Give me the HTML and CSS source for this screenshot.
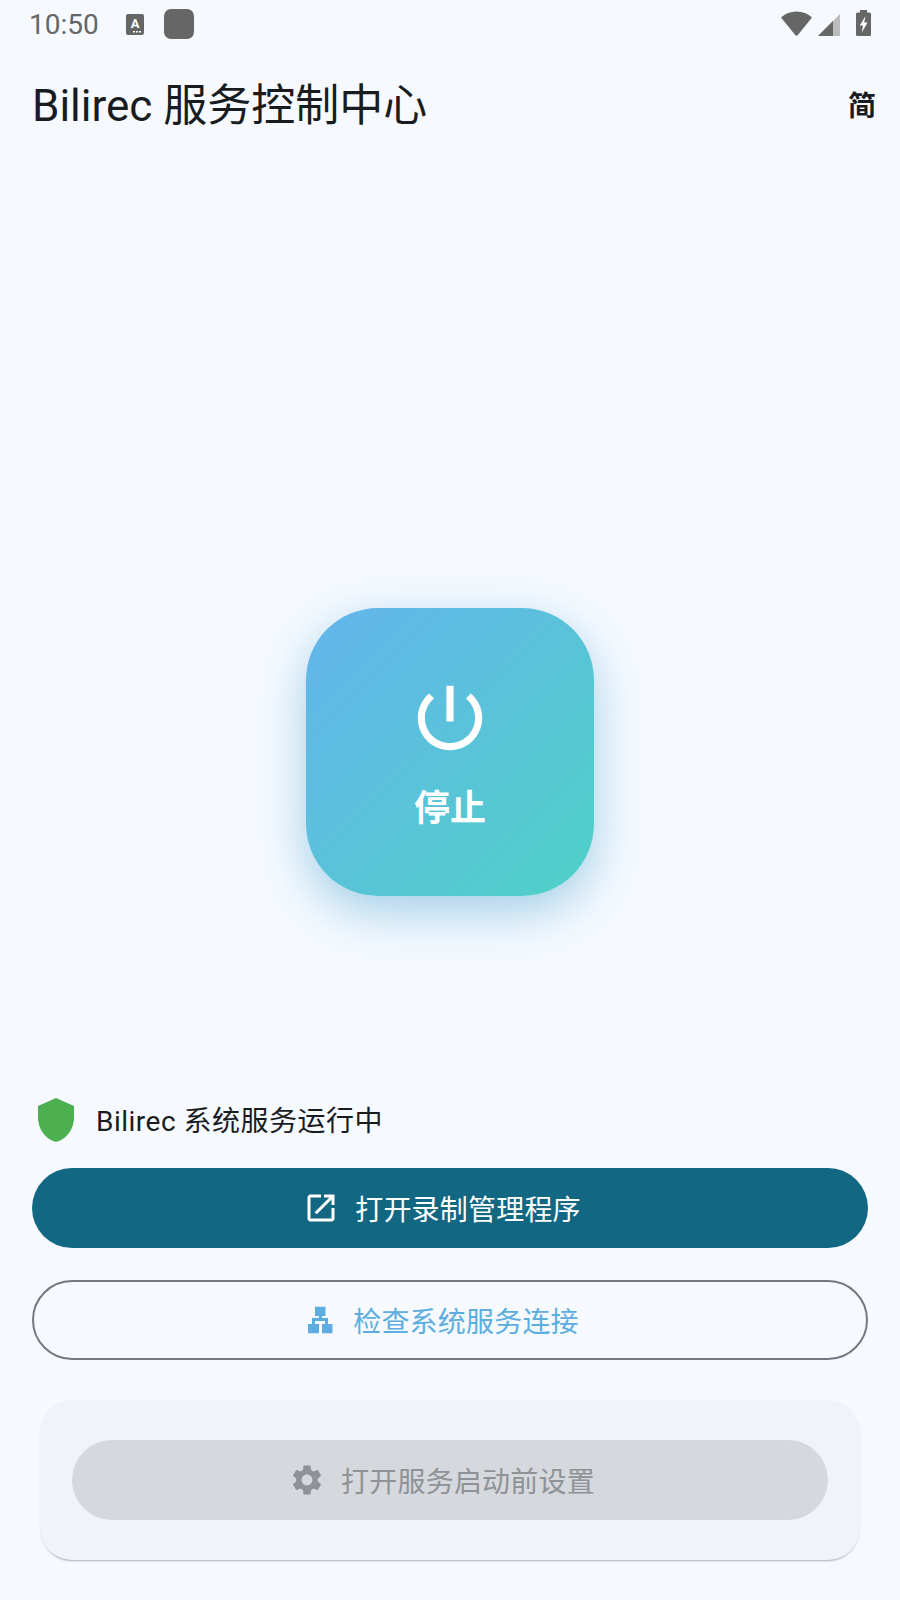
FILE: index.html
```html
<!DOCTYPE html>
<html>
<head>
    <meta charset="utf-8" />
    <title>Bilirec 服务控制中心</title>
    <link rel="stylesheet" href="styles.css">
</head>
<body>
    <div class="status-bar">
        <span class="clock">10:50</span>
        <svg class="note-a" viewBox="0 0 18 21">
            <rect width="18" height="21" rx="2" fill="#666"/>
            <text x="9" y="13.500" class="note-a-text">A</text>
            <rect x="7" y="17" width="2" height="1.500" fill="#fff"/>
            <rect x="10" y="17" width="2" height="1.500" fill="#fff"/>
            <rect x="13" y="17" width="2" height="1.500" fill="#fff"/>
        </svg>
        <div class="note-square"></div>
        <div class="status-right">
            <svg class="wifi" viewBox="0 0 31 25"><path d="M0 6.500C4 2.600 9.500 0.500 15.500 0.500S27 2.600 31 6.500L17 23.800a2 2 0 0 1-3 0z" fill="#666"/></svg>
            <svg class="signal" viewBox="0 0 22 22">
                <path d="M22 0V22H0z" fill="#bbb"/>
                <path d="M15 7V22H0z" fill="#666"/>
            </svg>
            <svg class="battery" viewBox="0 0 15 26">
                <path d="M4 0h7v2.500h2.500a1.500 1.500 0 0 1 1.500 1.500V24.500a1.500 1.500 0 0 1-1.500 1.500H1.500A1.500 1.500 0 0 1 0 24.500V4a1.500 1.500 0 0 1 1.500-1.500H4z" fill="#666"/>
                <path d="M9.500 6L3.800 15.500H7L5.800 22.500L11.500 12.500H8.200z" fill="#fff"/>
            </svg>
        </div>
    </div>

    <div class="app-bar">
        <h1 class="app-title">Bilirec 服务控制中心</h1>
        <span class="lang">简</span>
    </div>

    <div class="main">
        <div class="power-btn">
            <svg class="power-icon" viewBox="0 0 24 24"><path d="M13 3h-2v10h2V3zm4.830 2.170l-1.420 1.420C17.990 7.860 19 9.810 19 12c0 3.870-3.130 7-7 7s-7-3.130-7-7c0-2.190 1.010-4.140 2.580-5.420L6.170 5.170C4.230 6.820 3 9.260 3 12c0 4.970 4.030 9 9 9s9-4.030 9-9c0-2.740-1.230-5.180-3.170-6.830z"/></svg>
            <span class="power-label">停止</span>
        </div>
    </div>

    <div class="footer">
        <div class="service-row">
            <svg class="shield" viewBox="0 0 24 24"><path d="M12 1L3 5v6c0 5.550 3.840 10.740 9 12 5.160-1.260 9-6.450 9-12V5l-9-4z"/></svg>
            <span class="service-text">Bilirec 系统服务运行中</span>
        </div>
        <div class="btn btn-primary">
            <svg class="btn-icon" viewBox="0 0 24 24"><path d="M19 19H5V5h7V3H5c-1.110 0-2 .9-2 2v14c0 1.100.89 2 2 2h14c1.100 0 2-.9 2-2v-7h-2v7zM14 3v2h3.590l-9.830 9.830 1.410 1.410L19 6.410V10h2V3h-7z"/></svg>
            <span>打开录制管理程序</span>
        </div>
        <div class="btn btn-outline">
            <svg class="btn-icon-small" viewBox="0 0 30 30"><path d="M10 1.700H20.500V11H17V13H23V19H27.500V28.300H17V19H20V16H10V19H14V28.300H3V19H7V13H14V11H10z"/></svg>
            <span>检查系统服务连接</span>
        </div>
        <div class="card">
            <div class="btn btn-disabled">
                <svg class="btn-icon" viewBox="0 0 24 24"><path d="M19.140 12.940c.04-.3.06-.61.06-.94 0-.32-.02-.64-.07-.94l2.030-1.580c.18-.14.23-.41.12-.61l-1.920-3.320c-.12-.22-.37-.29-.59-.22l-2.390.96c-.5-.38-1.030-.7-1.620-.94l-.36-2.540c-.04-.24-.24-.41-.48-.41h-3.840c-.24 0-.43.17-.47.41l-.36 2.540c-.59.24-1.130.57-1.620.94l-2.390-.96c-.22-.08-.47 0-.59.22L2.740 8.870c-.12.21-.08.47.12.61l2.030 1.580c-.05.3-.09.63-.09.94s.02.64.07.94l-2.030 1.580c-.18.14-.23.41-.12.61l1.920 3.320c.12.22.37.29.59.22l2.390-.96c.5.38 1.030.7 1.620.94l.36 2.540c.05.24.24.41.48.41h3.840c.24 0 .44-.17.47-.41l.36-2.540c.59-.24 1.130-.56 1.620-.94l2.390.96c.22.08.47 0 .59-.22l1.920-3.320c.12-.22.07-.47-.12-.61l-2.010-1.580zM12 15.600c-1.980 0-3.600-1.620-3.600-3.600s1.620-3.600 3.600-3.600 3.600 1.620 3.600 3.600-1.620 3.600-3.600 3.600z"/></svg>
                <span>打开服务启动前设置</span>
            </div>
        </div>
    </div>
</body>
</html>
```

FILE: styles.css
```css
html, body {
    overflow: hidden;
}

body {
    margin: 0;
    width: 900px;
    height: 1600px;
    display: flex;
    flex-direction: column;
    background: #f6faff;
    color: #191c1e;
    font-family: Roboto, "Noto Sans CJK SC", sans-serif;
}

/* status bar */
.status-bar {
    height: 48px;
    display: flex;
    align-items: center;
    padding: 0 29px;
    color: #666;
}

.clock {
    width: 97px;
    margin-top: 2px;
    font-size: 28px;
    line-height: 48px;
}

.note-a {
    width: 18px;
    height: 21px;
    margin-right: 20px;
}

.note-a-text {
    font: bold 13px Roboto, sans-serif;
    fill: #fff;
    text-anchor: middle;
}

.note-square {
    width: 30px;
    height: 30px;
    border-radius: 7px;
    background: #666;
}

.status-right {
    margin-left: auto;
    margin-bottom: 2px;
    display: flex;
    align-items: flex-end;
}

.wifi {
    width: 31px;
    height: 25px;
    margin-right: 6px;
}

.signal {
    width: 22px;
    height: 22px;
    margin-right: 16px;
}

.battery {
    width: 15px;
    height: 26px;
}

/* title */
.app-bar {
    height: 108px;
    padding-bottom: 4px;
    display: flex;
    align-items: center;
    justify-content: space-between;
    padding-left: 32px;
    padding-right: 24px;
}

.app-title {
    margin: 0;
    font-size: 44px;
    font-weight: 400;
}

.lang {
    font-size: 28px;
    font-weight: 700;
    margin-top: 4px;
}

/* power */
.main {
    flex: 1;
    display: flex;
    align-items: flex-start;
    justify-content: center;
    padding-top: 448px;
}

.power-btn {
    width: 288px;
    height: 288px;
    border-radius: 72px;
    display: flex;
    flex-direction: column;
    align-items: center;
    background: linear-gradient(135deg, #64b4ec, #4fd1c7);
    box-shadow: 0 16px 48px rgba(80, 165, 210, 0.5);
    color: #fff;
}

.power-icon {
    width: 86px;
    height: 86px;
    margin-top: 67px;
    fill: #fff;
}

.power-label {
    margin-top: 22px;
    font-size: 36px;
    font-weight: 700;
    line-height: 52px;
}

/* bottom */
.footer {
    display: flex;
    flex-direction: column;
    padding: 0 32px 40px;
}

.service-row {
    height: 48px;
    display: flex;
    align-items: center;
    margin-bottom: 24px;
}

.shield {
    width: 48px;
    height: 48px;
    margin-right: 16px;
    fill: #4caf50;
}

.service-text {
    font-size: 28px;
    letter-spacing: 0.5px;
    margin-top: -2px;
}

.btn {
    height: 80px;
    box-sizing: border-box;
    border-radius: 40px;
    padding-right: 16px;
    display: flex;
    align-items: center;
    justify-content: center;
    font-size: 28px;
    letter-spacing: 0.2px;
}

.btn-icon {
    width: 36px;
    height: 36px;
    margin-right: 16px;
    fill: currentColor;
}

.btn-icon-small {
    width: 30px;
    height: 30px;
    margin-right: 18px;
    fill: currentColor;
}

.btn-primary {
    background: #126782;
    color: #fff;
}

.btn-outline {
    margin-top: 32px;
    border: 2px solid #72787c;
    color: #5dade0;
}

.card {
    margin: 40px 8px 0;
    padding: 40px 32px;
    border-radius: 32px;
    background: #f0f4f9;
    box-shadow: 0 2px 2px -1px rgba(0, 0, 0, 0.3);
}

.btn-disabled {
    background: #d5d8dc;
    color: #8f9296;
}
```
